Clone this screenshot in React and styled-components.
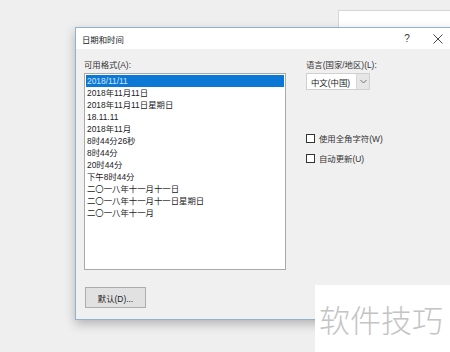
import React from "react";
import styled, { createGlobalStyle } from "styled-components";

const formats = [
  "2018/11/11",
  "2018年11月11日",
  "2018年11月11日星期日",
  "18.11.11",
  "2018年11月",
  "8时44分26秒",
  "8时44分",
  "20时44分",
  "下午8时44分",
  "二〇一八年十一月十一日",
  "二〇一八年十一月十一日星期日",
  "二〇一八年十一月",
];

const GlobalStyle = createGlobalStyle`
  html, body {
    margin: 0;
    padding: 0;
    background: #efefef;
    font-family: "Liberation Sans", "Noto Sans CJK SC", sans-serif;
  }
`;

const Desktop = styled.div`
  position: relative;
  width: 450px;
  height: 352px;
  overflow: hidden;
  background: #efefef;
`;

const BackWindow = styled.div`
  position: absolute;
  left: 338px;
  top: 10px;
  width: 130px;
  height: 60px;
  background: #fff;
  border: 1px solid #d6d6d6;
`;

const Dialog = styled.div`
  position: absolute;
  left: 75px;
  top: 27px;
  width: 380px;
  height: 293px;
  box-sizing: border-box;
  background: #f0f0f0;
  border: 1px solid #8fb3cf;
  box-shadow: 0 4px 10px rgba(0, 0, 0, 0.25);
  display: flex;
  flex-direction: column;
`;

const TitleBar = styled.div`
  height: 21px;
  background: #fff;
  display: flex;
  align-items: center;
  padding-left: 6px;
  font-size: 8.4px;
  color: #222;
`;

const Title = styled.div`
  flex: 1;
`;

const TitleButton = styled.div`
  width: ${(p) => p.$w}px;
  display: flex;
  align-items: center;
  justify-content: center;
  font-size: 10px;
  color: #333;
`;

const Body = styled.div`
  flex: 1;
  display: flex;
  flex-direction: column;
  padding: 10px 8px 0 8px;
`;

const Columns = styled.div`
  display: flex;
  gap: 20px;
`;

const Column = styled.div`
  display: flex;
  flex-direction: column;
`;

const Label = styled.div`
  font-size: 8.4px;
  color: #333;
  height: 14px;
  line-height: 12px;
`;

const ListBox = styled.div`
  width: 202px;
  height: 197px;
  box-sizing: border-box;
  background: #fff;
  border: 1px solid #a9a9a9;
  padding: 1px;
`;

const Row = styled.div`
  height: 12px;
  line-height: 12px;
  font-size: 8.4px;
  padding-left: 1px;
  color: ${(p) => (p.$selected ? "#cfe6ff" : "#222")};
  background: ${(p) => (p.$selected ? "#0a78d4" : "transparent")};
  white-space: nowrap;
`;

const Select = styled.div`
  width: 64px;
  height: 17px;
  box-sizing: border-box;
  display: flex;
  background: #fff;
  border: 1px solid #d0d0d0;
  font-size: 8.4px;
  color: #222;
`;

const SelectText = styled.div`
  flex: 1;
  display: flex;
  align-items: center;
  padding-left: 4px;
`;

const SelectArrow = styled.div`
  width: 12px;
  background: #e6e6e6;
  border-left: 1px solid #d6d6d6;
  display: flex;
  align-items: center;
  justify-content: center;
`;

const Options = styled.div`
  margin-top: 42px;
  display: flex;
  flex-direction: column;
  gap: 8px;
`;

const CheckRow = styled.label`
  display: flex;
  align-items: center;
  gap: 4px;
  font-size: 8.4px;
  color: #333;
`;

const Box = styled.span`
  width: 9px;
  height: 9px;
  box-sizing: border-box;
  border: 1px solid #333;
  background: #fff;
`;

const Button = styled.div`
  margin-top: 17px;
  margin-left: 1px;
  width: 61px;
  height: 21px;
  box-sizing: border-box;
  background: #e1e1e1;
  border: 1px solid #adadad;
  font-size: 8.4px;
  color: #222;
  display: flex;
  align-items: center;
  justify-content: center;
`;

const Watermark = styled.div`
  position: absolute;
  left: 315px;
  top: 285px;
  width: 135px;
  height: 67px;
  background: #fff;
  display: flex;
  align-items: center;
  padding-left: 4px;
  box-sizing: border-box;
  font-family: "Noto Sans CJK SC", sans-serif;
  font-weight: 300;
  font-size: 31px;
  color: #c4c4c4;
`;

const Chevron = () => (
  <svg width="7" height="5" viewBox="0 0 7 5">
    <path d="M0.5 1 L3.5 4 L6.5 1" fill="none" stroke="#666" strokeWidth="0.9" />
  </svg>
);

const CloseIcon = () => (
  <svg width="10" height="10" viewBox="0 0 10 10">
    <path d="M0.5 0.5 L9.5 9.5 M9.5 0.5 L0.5 9.5" fill="none" stroke="#333" strokeWidth="0.9" />
  </svg>
);

export default function App() {
  return (
    <Desktop>
      <GlobalStyle />
      <BackWindow />
      <Dialog>
        <TitleBar>
          <Title>日期和时间</Title>
          <TitleButton $w={30}>?</TitleButton>
          <TitleButton $w={32}>
            <CloseIcon />
          </TitleButton>
        </TitleBar>
        <Body>
          <Columns>
            <Column>
              <Label>可用格式(A):</Label>
              <ListBox>
                {formats.map((f, i) => (
                  <Row key={f} $selected={i === 0}>
                    {f}
                  </Row>
                ))}
              </ListBox>
            </Column>
            <Column>
              <Label>语言(国家/地区)(L):</Label>
              <Select>
                <SelectText>中文(中国)</SelectText>
                <SelectArrow>
                  <Chevron />
                </SelectArrow>
              </Select>
              <Options>
                <CheckRow>
                  <Box />
                  使用全角字符(W)
                </CheckRow>
                <CheckRow>
                  <Box />
                  自动更新(U)
                </CheckRow>
              </Options>
            </Column>
          </Columns>
          <Button>默认(D)...</Button>
        </Body>
      </Dialog>
      <Watermark>软件技巧</Watermark>
    </Desktop>
  );
}
